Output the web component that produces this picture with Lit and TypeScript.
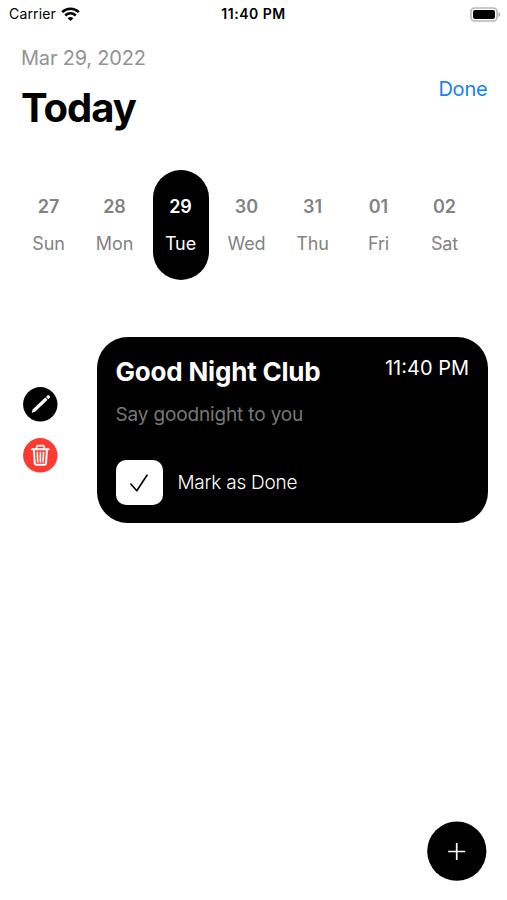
import { LitElement, html, css } from "lit";
import { customElement } from "lit/decorators.js";
import { classMap } from "lit/directives/class-map.js";

interface Day {
  date: string;
  name: string;
  selected?: boolean;
}

const DAYS: Day[] = [
  { date: "27", name: "Sun" },
  { date: "28", name: "Mon" },
  { date: "29", name: "Tue", selected: true },
  { date: "30", name: "Wed" },
  { date: "31", name: "Thu" },
  { date: "01", name: "Fri" },
  { date: "02", name: "Sat" },
];

@customElement("status-bar")
class StatusBar extends LitElement {
  static styles = css`
    :host {
      display: grid;
      grid-template-columns: 1fr auto 1fr;
      align-items: center;
      height: 27px;
      padding: 0 6px 0 9px;
      font-size: 14px;
      line-height: 28px;
    }
    .carrier { display: flex; align-items: center; gap: 5px; letter-spacing: 0.15px; }
    .time { font-weight: 600; letter-spacing: 0.5px; padding-right: 3px; font-size: 14px; }
    .battery { justify-self: end; }
    svg { display: block; }
  `;
  render() {
    return html`
      <div class="carrier">
        <span>Carrier</span>
        <svg width="19" height="15" viewBox="0 0 19 15" fill="none" stroke="#000" stroke-width="2.6">
          <path d="M1.2 5.1C6 .6 13 .6 17.8 5.1" />
          <path d="M4.2 8.5c3.1-2.8 7.5-2.8 10.6 0" />
          <path d="M9.5 14.1 6.6 11.2c1.7-1.5 4.1-1.5 5.8 0z" fill="#000" stroke="none" />
        </svg>
      </div>
      <div class="time">11:40 PM</div>
      <svg class="battery" width="31" height="15" viewBox="0 0 31 15">
        <rect x="0.9" y="1" width="26.2" height="13" rx="4" fill="#fff" stroke="#b5b5b5" stroke-width="1.6" />
        <rect x="3" y="3" width="22" height="9" rx="2" fill="#000" />
        <path d="M28.5 5.2c2.4.7 2.4 4 0 4.7z" fill="#aaa" />
      </svg>
    `;
  }
}

@customElement("day-strip")
class DayStrip extends LitElement {
  static styles = css`
    :host { display: flex; gap: 10px; padding-left: 20.5px; }
    .day {
      box-sizing: border-box;
      width: 56px;
      height: 110px;
      border-radius: 28px;
      padding-top: 25px;
      display: flex;
      flex-direction: column;
      align-items: center;
      gap: 13px;
      color: #828282;
      font-size: 18px;
      line-height: 24px;
    }
    .selected { background: #000; color: #fff; }
    .date { font-weight: 600; }
    .name { font-weight: 400; letter-spacing: -0.1px; }
  `;
  render() {
    return DAYS.map(
      (d) => html`<div class=${classMap({ day: true, selected: !!d.selected })}>
        <span class="date">${d.date}</span><span class="name">${d.name}</span>
      </div>`
    );
  }
}

@customElement("task-row")
class TaskRow extends LitElement {
  static styles = css`
    :host { display: flex; align-items: center; padding: 0 19.5px 0 23px; }
    .actions { display: flex; flex-direction: column; gap: 16.5px; width: 74px; flex: none; }
    svg { display: block; }
    .card {
      box-sizing: border-box;
      flex: 1;
      height: 186px;
      border-radius: 31px;
      background: #000;
      color: #fff;
      padding: 18px 18.5px;
      display: flex;
      flex-direction: column;
    }
    .top { display: flex; justify-content: space-between; }
    .title { font-size: 26px; line-height: 34px; font-weight: 700; letter-spacing: -0.2px; }
    .time { font-size: 20px; line-height: 27px; }
    .note { color: #787878; font-size: 19px; line-height: 26px; margin-top: 13px; letter-spacing: -0.15px; }
    .mark { display: flex; align-items: center; gap: 15px; margin-top: 32px; font-size: 19px; }
    .label { letter-spacing: -0.25px; font-weight: 300; }
    .box {
      width: 47px;
      height: 45px;
      border-radius: 10px;
      background: #fff;
      display: flex;
      align-items: center;
      justify-content: center;
    }
  `;
  render() {
    return html`
      <div class="actions">
        <svg width="35" height="35" viewBox="0 0 35 35">
          <circle cx="17.3" cy="17.3" r="17.2" fill="#000" />
          <path d="M8.7 26 9.8 22.3 22.3 10.5 24.6 12.8 12.3 24.6z" fill="#fff" />
          <path d="M23.5 9.8 24.5 8.9c1.3-1 2.8.5 1.7 1.9l-1 1z" fill="#fff" stroke="#fff" stroke-width="1" stroke-linejoin="round" />
        </svg>
        <svg width="35" height="35" viewBox="0 0 35 35">
          <circle cx="17.3" cy="17.3" r="17.2" fill="#fa3b31" />
          <g fill="none" stroke="#fff" stroke-linecap="round" stroke-linejoin="round">
            <path d="M9.2 11.3H25.6" stroke-width="2.1" />
            <path d="M13.6 11V9.2c0-1 .6-1.6 1.6-1.6h4.5c1 0 1.6.6 1.6 1.6V11" stroke-width="1.7" />
            <path d="M10.9 12 11.7 25c.1 1.2.8 1.8 1.8 1.8h7.8c1 0 1.7-.6 1.8-1.8L23.9 12" stroke-width="2" />
            <path d="M14.3 14.2 14.7 24M17.4 14.2V24M20.5 14.2 20.1 24" stroke-width="1.6" />
          </g>
        </svg>
      </div>
      <div class="card">
        <div class="top">
          <span class="title">Good Night Club</span>
          <span class="time">11:40 PM</span>
        </div>
        <div class="note">Say goodnight to you</div>
        <div class="mark">
          <span class="box">
            <svg width="20" height="20" viewBox="0 0 20 20" fill="none" stroke="#000" stroke-width="1.6" stroke-linecap="round" stroke-linejoin="round">
              <path d="M1.8 11 7.8 17.8 18 2.2" />
            </svg>
          </span>
          <span class="label">Mark as Done</span>
        </div>
      </div>
    `;
  }
}

@customElement("app-root")
class AppRoot extends LitElement {
  static styles = css`
    :host {
      display: flex;
      flex-direction: column;
      box-sizing: border-box;
      height: 900px;
      background: #fff;
      color: #000;
      font-family: Inter, "Liberation Sans", sans-serif;
    }
    header {
      display: flex;
      justify-content: space-between;
      align-items: center;
      height: 90px;
      padding: 0 19.5px 0 21px;
      margin: 16.5px 0 36px;
    }
    .date { color: #929292; font-size: 20px; line-height: 28px; letter-spacing: -0.2px; }
    h1 { margin: 11px 0 0; font-size: 40px; line-height: 50px; font-weight: 700; letter-spacing: -1px; }
    .done { color: #147efb; font-size: 20px; line-height: 26px; letter-spacing: -0.2px; margin-top: 1px; }
    task-row { margin-top: 57.5px; }
    .fab { display: flex; margin: auto 20px 19px auto; }
  `;
  render() {
    return html`
      <status-bar></status-bar>
      <header>
        <div>
          <div class="date">Mar 29, 2022</div>
          <h1>Today</h1>
        </div>
        <span class="done">Done</span>
      </header>
      <day-strip></day-strip>
      <task-row></task-row>
      <svg class="fab" width="60" height="60" viewBox="0 0 60 60">
        <circle cx="29.8" cy="30.2" r="29.6" fill="#000" />
        <path d="M29.7 22v17M21.2 30.5h17" stroke="#fff" stroke-width="1.7" />
      </svg>
    `;
  }
}
